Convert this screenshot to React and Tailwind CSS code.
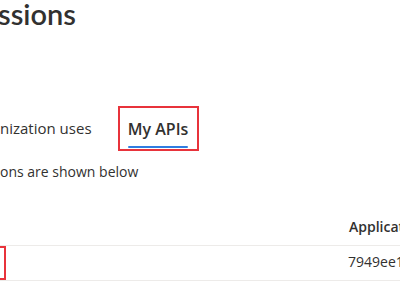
export default function App() {
  return (
    <div
      className="w-[400px] h-[284px] overflow-hidden bg-white text-[#323130]"
      style={{ fontFamily: '"Open Sans", "Noto Sans", sans-serif' }}
    >
      {/* page title, cut off on the left */}
      <h1
        className="text-[29px] font-semibold leading-[30px] -mt-[1px] -ml-[2px] h-[106px]"
        style={{ fontFamily: 'Lato, "Open Sans", sans-serif' }}
      >
        ssions
      </h1>

      {/* tabs */}
      <div className="flex items-start h-[46px]">
        <div className="shrink-0 pt-[13px] text-[15px] leading-[20px]">nization uses</div>
        <div className="shrink-0 ml-[26px] mt-[1px] w-[81px] h-[45px] border-2 border-[#e8333b] flex flex-col items-center pt-[10px]">
          <span className="text-[16px] font-semibold leading-[22px]">My APIs</span>
          <span className="mt-[6px] w-[60px] h-[2px] bg-[#2f7de1] rounded-full" />
        </div>
      </div>

      <p className="mt-[11px] text-[14px] leading-[20px]">ons are shown below</p>

      {/* table header */}
      <div className="mt-[35px] flex h-[28px]">
        <div className="shrink-0 ml-[349px] text-[14px] font-semibold leading-[20px] whitespace-nowrap">
          Application (client) ID
        </div>
      </div>

      {/* row */}
      <div className="flex h-[36px] border-y border-[#edebe9]">
        <div className="shrink-0 -ml-[20px] w-[26px] h-[34px] border-2 border-[#e8333b]" />
        <div className="shrink-0 ml-[342px] pt-[6px] text-[14px] leading-[20px] whitespace-nowrap">
          7949ee1f-8a2b-4c3d-9e5f
        </div>
      </div>
    </div>
  );
}
